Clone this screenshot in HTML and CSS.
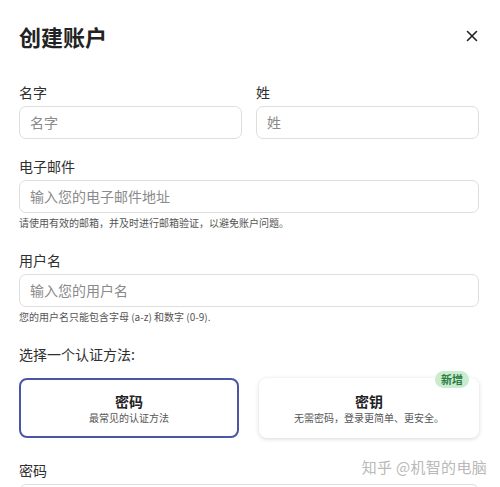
FILE: index.html
```html
<!DOCTYPE html>
<html lang="zh-CN">
<head>
<meta charset="utf-8">
<title>创建账户</title>
<link rel="stylesheet" href="styles.css">
</head>
<body>
<div class="modal">
  <div class="header">
    <h1 class="title">创建账户</h1>
    <button class="close" aria-label="关闭">
      <svg width="12" height="12" viewBox="0 0 12 12"><path d="M1.5 1.5L10.5 10.5M10.5 1.5L1.5 10.5" stroke="#222" stroke-width="1.6" stroke-linecap="round"/></svg>
    </button>
  </div>

  <div class="row">
    <div class="field">
      <label class="label">名字</label>
      <div class="input">名字</div>
    </div>
    <div class="field">
      <label class="label">姓</label>
      <div class="input">姓</div>
    </div>
  </div>

  <div class="field block">
    <label class="label">电子邮件</label>
    <div class="input">输入您的电子邮件地址</div>
    <p class="help">请使用有效的邮箱，并及时进行邮箱验证，以避免账户问题。</p>
  </div>

  <div class="field block">
    <label class="label">用户名</label>
    <div class="input">输入您的用户名</div>
    <p class="help">您的用户名只能包含字母 (a-z) 和数字 (0-9).</p>
  </div>

  <div class="label method-label">选择一个认证方法:</div>
  <div class="cards">
    <div class="card selected">
      <div class="card-title">密码</div>
      <div class="card-sub">最常见的认证方法</div>
    </div>
    <div class="card">
      <span class="badge">新增</span>
      <div class="card-title">密钥</div>
      <div class="card-sub">无需密码，登录更简单、更安全。</div>
    </div>
  </div>

  <div class="field block pw">
    <label class="label">密码</label>
    <div class="input"></div>
  </div>

  <div class="watermark">知乎 @机智的电脑</div>
</div>
</body>
</html>
```

FILE: styles.css
```css
html, body {
  margin: 0;
  padding: 0;
  background: #fff;
}
body {
  font-family: "Noto Sans CJK SC", "Noto Sans", sans-serif;
  color: #2a2a2a;
  overflow: hidden;
}
.modal {
  position: relative;
  width: 500px;
  height: 487px;
  box-sizing: border-box;
  padding: 20px 21px 0 19px;
  background: #fff;
  overflow: hidden;
}
.header {
  display: flex;
  align-items: center;
  justify-content: space-between;
  height: 32px;
}
.title {
  margin: 0;
  font-size: 22px;
  line-height: 32px;
  font-weight: 700;
  color: #222;
}
.close {
  border: 0;
  background: none;
  padding: 0;
  margin-right: 1px;
  width: 12px;
  height: 12px;
  display: flex;
}
.row {
  display: grid;
  grid-template-columns: 1fr 1fr;
  gap: 14px;
  margin-top: 30px;
}
.field {
  display: flex;
  flex-direction: column;
}
.label {
  display: block;
  font-size: 14px;
  line-height: 20px;
  color: #2f2f2f;
  margin-bottom: 4px;
}
.input {
  height: 33px;
  box-sizing: border-box;
  border: 1px solid #dedede;
  border-radius: 7px;
  padding: 0 10px;
  font-size: 14px;
  line-height: 31px;
  color: #8a8a8a;
  background: #fff;
}
.block {
  margin-top: 17px;
}
.help {
  margin: 3px 0 0;
  font-size: 10px;
  line-height: 14px;
  color: #555;
}
.block + .block {
  margin-top: 20px;
}
.method-label {
  margin-top: 20px;
  margin-bottom: 0;
}
.cards {
  display: grid;
  grid-template-columns: 1fr 1fr;
  gap: 20px;
  margin-top: 14px;
}
.card {
  position: relative;
  height: 60px;
  box-sizing: border-box;
  border-radius: 8px;
  background: #fff;
  box-shadow: 0 1px 4px rgba(0, 0, 0, 0.16);
  display: flex;
  flex-direction: column;
  align-items: center;
  justify-content: center;
  text-align: center;
}
.card.selected {
  border: 2px solid #4b55a8;
  box-shadow: none;
}
.card-title {
  font-size: 14px;
  line-height: 18px;
  font-weight: 700;
  color: #222;
}
.card-sub {
  font-size: 10px;
  line-height: 14px;
  color: #555;
  margin-top: 1px;
}
.badge {
  position: absolute;
  top: -7px;
  right: 10px;
  height: 17px;
  padding: 0 6px;
  border-radius: 9px;
  background: #c9ebd0;
  color: #2c7a3d;
  font-size: 11px;
  line-height: 17px;
  font-weight: 700;
}
.pw {
  margin-top: 22px;
}
.block.pw {
  margin-top: 22px;
}
.watermark {
  position: absolute;
  right: 13px;
  top: 457px;
  font-size: 15px;
  line-height: 20px;
  color: #b9b9b9;
  letter-spacing: 0.3px;
}
```
